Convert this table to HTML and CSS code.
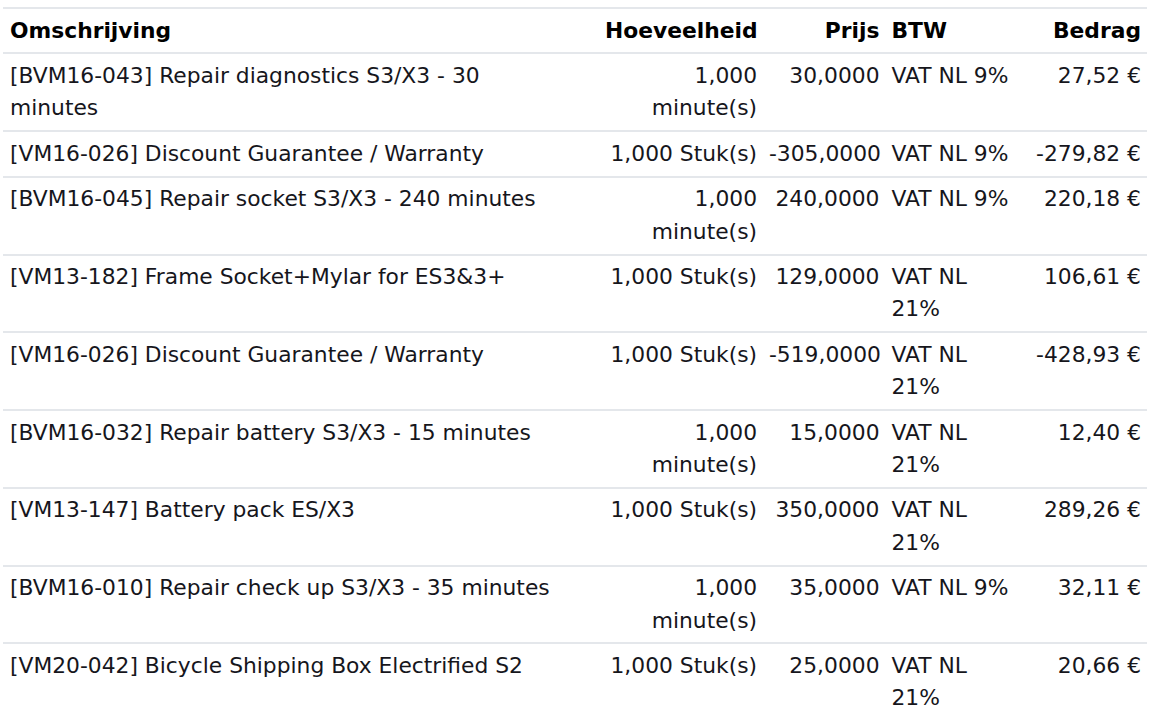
FILE: index.html
```html
<!DOCTYPE html>
<html lang="nl">
<head>
<meta charset="utf-8">
<title>Factuurregels</title>
<link rel="stylesheet" href="styles.css">
</head>
<body>
<div class="wrap">
<table class="lines">
  <colgroup>
    <col class="c-desc"><col class="c-qty"><col class="c-price"><col class="c-tax"><col class="c-amt">
  </colgroup>
  <thead>
    <tr>
      <th class="left">Omschrijving</th>
      <th class="right">Hoeveelheid</th>
      <th class="right">Prijs</th>
      <th class="left">BTW</th>
      <th class="right">Bedrag</th>
    </tr>
  </thead>
  <tbody>
    <tr><td class="desc">[BVM16-043] Repair diagnostics S3/X3 - 30 minutes</td><td class="right">1,000 minute(s)</td><td class="right nw">30,0000</td><td>VAT NL 9%</td><td class="right nw">27,52 €</td></tr>
    <tr><td class="desc">[VM16-026] Discount Guarantee / Warranty</td><td class="right">1,000 Stuk(s)</td><td class="right nw">-305,0000</td><td>VAT NL 9%</td><td class="right nw">-279,82 €</td></tr>
    <tr><td class="desc">[BVM16-045] Repair socket S3/X3 - 240 minutes</td><td class="right">1,000 minute(s)</td><td class="right nw">240,0000</td><td>VAT NL 9%</td><td class="right nw">220,18 €</td></tr>
    <tr><td class="desc">[VM13-182] Frame Socket+Mylar for ES3&amp;3+</td><td class="right">1,000 Stuk(s)</td><td class="right nw">129,0000</td><td>VAT NL 21%</td><td class="right nw">106,61 €</td></tr>
    <tr><td class="desc">[VM16-026] Discount Guarantee / Warranty</td><td class="right">1,000 Stuk(s)</td><td class="right nw">-519,0000</td><td>VAT NL 21%</td><td class="right nw">-428,93 €</td></tr>
    <tr><td class="desc">[BVM16-032] Repair battery S3/X3 - 15 minutes</td><td class="right">1,000 minute(s)</td><td class="right nw">15,0000</td><td>VAT NL 21%</td><td class="right nw">12,40 €</td></tr>
    <tr><td class="desc">[VM13-147] Battery pack ES/X3</td><td class="right">1,000 Stuk(s)</td><td class="right nw">350,0000</td><td>VAT NL 21%</td><td class="right nw">289,26 €</td></tr>
    <tr><td class="desc">[BVM16-010] Repair check up S3/X3 - 35 minutes</td><td class="right">1,000 minute(s)</td><td class="right nw">35,0000</td><td>VAT NL 9%</td><td class="right nw">32,11 €</td></tr>
    <tr><td class="desc">[VM20-042] Bicycle Shipping Box Electrified S2</td><td class="right">1,000 Stuk(s)</td><td class="right nw">25,0000</td><td>VAT NL 21%</td><td class="right nw">20,66 €</td></tr>
  </tbody>
</table>
</div>
</body>
</html>
```
FILE: styles.css
```css
html, body {
  margin: 0;
  padding: 0;
  background: #ffffff;
}
.wrap {
  padding: 7px 18px 0 3px;
}
.lines {
  width: 1144px;
  border-collapse: collapse;
  table-layout: fixed;
  font-family: "DejaVu Sans", Verdana, sans-serif;
  font-size: 21.8px;
  line-height: 32.3px;
  color: #16161c;
}
.c-desc { width: 596px; }
.c-qty { width: 164px; }
.c-price { width: 122.5px; }
.c-tax { width: 135.5px; }
.c-amt { width: 126px; }
.lines th,
.lines td {
  padding: 5.6px 6px;
  vertical-align: top;
  border-top: 2px solid #e4e7eb;
  text-align: left;
}
.lines th {
  font-weight: bold;
  color: #000000;
  white-space: nowrap;
}
.lines td.desc {
  padding-left: 7px;
  padding-right: 36px;
}
.lines th.left:first-child {
  padding-left: 7px;
}
.lines .right { text-align: right; }
.lines .left { text-align: left; }
.lines .nw { white-space: nowrap; }
```
